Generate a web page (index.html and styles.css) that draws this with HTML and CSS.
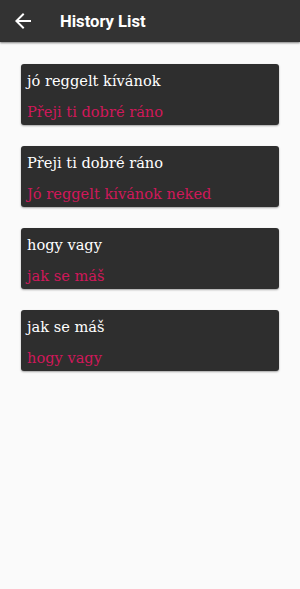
FILE: index.html
```html
<!DOCTYPE html>
<html lang="hu">
  <head>
    <meta charset="UTF-8" />
    <meta name="viewport" content="width=device-width, initial-scale=1.0" />
    <title>History List</title>
    <link rel="stylesheet" href="styles.css">
  </head>
  <body>
    <header class="toolbar">
      <svg class="back" width="24" height="24" viewBox="0 0 24 24">
        <path d="M20 11H7.83l5.59-5.59L12 4l-8 8 8 8 1.41-1.41L7.83 13H20v-2z" fill="#fff" />
      </svg>
      <h1>History List</h1>
    </header>
    <main class="list">
      <div class="card">
        <p class="source">jó reggelt kívánok</p>
        <p class="target">Přeji ti dobré ráno</p>
      </div>
      <div class="card">
        <p class="source">Přeji ti dobré ráno</p>
        <p class="target">Jó reggelt kívánok neked</p>
      </div>
      <div class="card">
        <p class="source">hogy vagy</p>
        <p class="target">jak se máš</p>
      </div>
      <div class="card">
        <p class="source">jak se máš</p>
        <p class="target">hogy vagy</p>
      </div>
    </main>
  </body>
</html>
```

FILE: styles.css
```css
body {
  margin: 0;
  background-color: #fafafa;
  font-family: "DejaVu Serif", serif;
}
.toolbar {
  height: 42px;
  background-color: #333333;
  display: flex;
  align-items: center;
  box-shadow: 0 1px 2px rgba(0, 0, 0, 0.5);
}
.toolbar .back {
  margin-left: 11px;
  width: 24px;
  height: 24px;
}
.toolbar h1 {
  margin: 0 0 0 25px;
  font-family: Roboto, sans-serif;
  font-size: 16.6px;
  font-weight: 700;
  color: #fff;
}
.list {
  display: flex;
  flex-direction: column;
  gap: 21px;
  padding: 22px 21px;
}
.card {
  background-color: #2e2e2e;
  border-radius: 3px;
  height: 61px;
  padding: 0 6px;
  box-sizing: border-box;
  box-shadow: 0 1px 2px rgba(0, 0, 0, 0.35);
}
.card p {
  margin: 0;
  font-size: 14.6px;
  line-height: 18px;
}
.card .source {
  color: #fff;
  padding-top: 8px;
}
.card .target {
  color: #d0185a;
  padding-top: 13px;
}
```
